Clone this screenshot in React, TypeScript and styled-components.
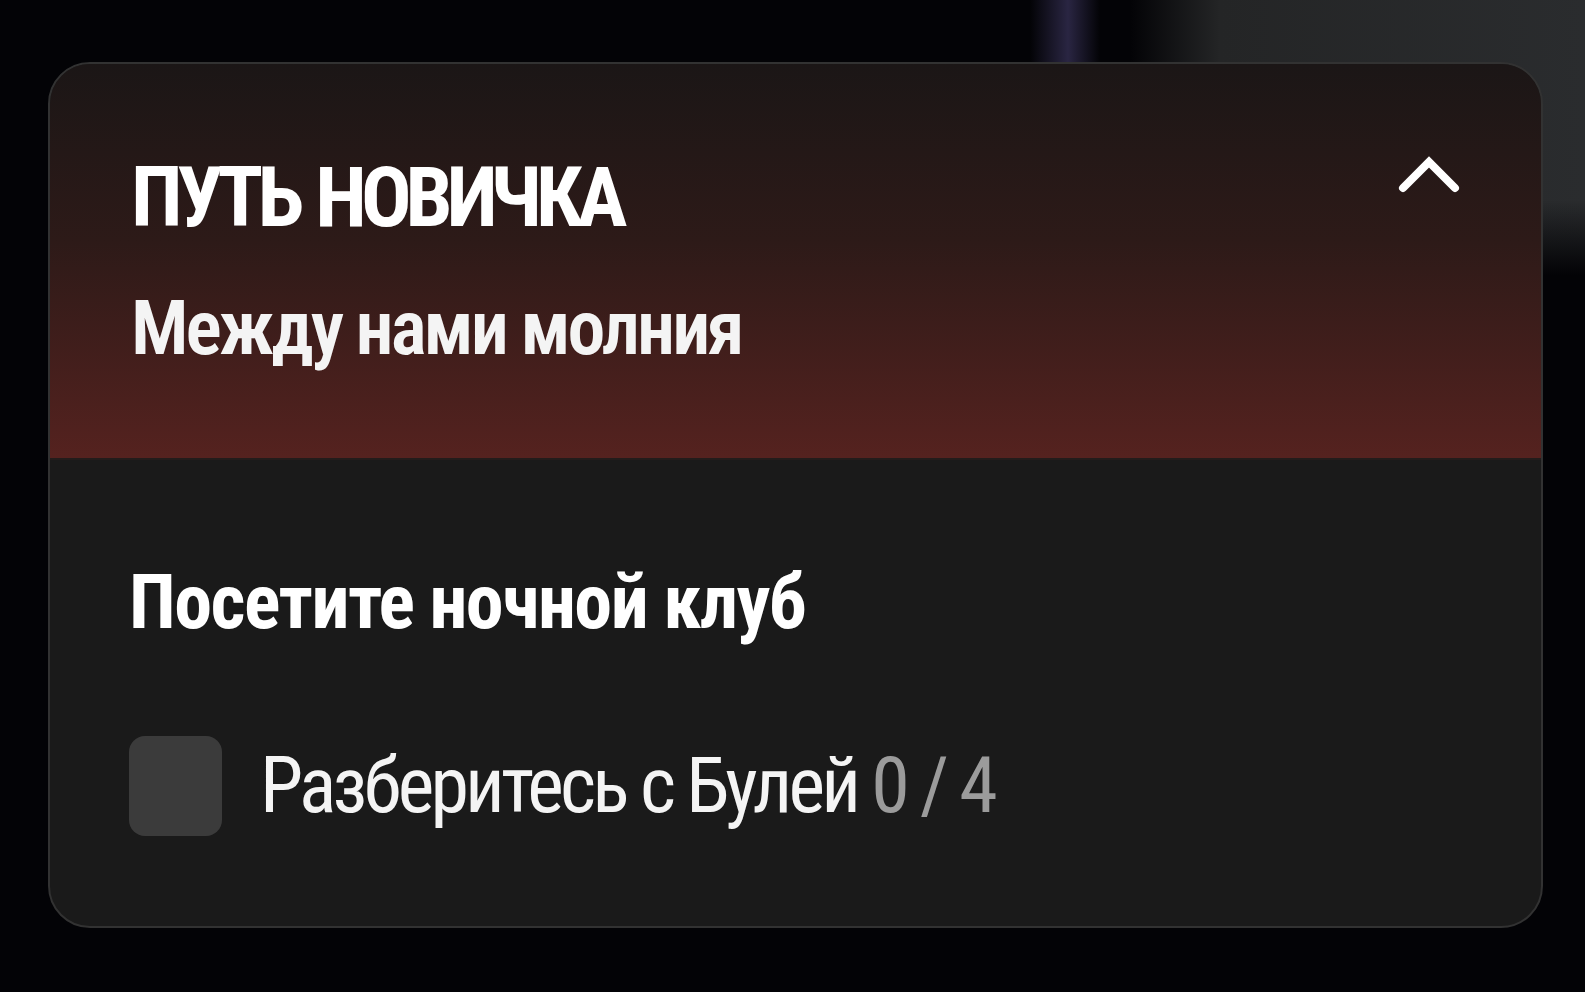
import styled, { createGlobalStyle } from "styled-components";

const GlobalStyle = createGlobalStyle`
  html, body {
    margin: 0;
    padding: 0;
    background: #030306;
  }
  * {
    box-sizing: border-box;
  }
`;

export default function App() {
  return (
    <Page>
      <GlobalStyle />
      <Card>
        <Header>
          <HeaderTop>
            <Title>ПУТЬ НОВИЧКА</Title>
            <Toggle aria-label="Свернуть">
              <svg width="64" height="40" viewBox="0 0 64 40" fill="none">
                <path
                  d="M6 34 L32 8 L58 34"
                  stroke="#fff"
                  strokeWidth="8"
                  strokeLinecap="round"
                  strokeLinejoin="miter"
                />
              </svg>
            </Toggle>
          </HeaderTop>
          <Subtitle>Между нами молния</Subtitle>
        </Header>

        <Body>
          <TaskTitle>Посетите ночной клуб</TaskTitle>
          <TaskRow>
            <Checkbox />
            <TaskText>
              Разберитесь с Булей <Progress>0 / 4</Progress>
            </TaskText>
          </TaskRow>
        </Body>
      </Card>
    </Page>
  );
}

const Page = styled.div`
  width: 1585px;
  height: 992px;
  padding: 62px 42px 0 48px;
  background:
    linear-gradient(90deg, transparent 1030px, rgba(58, 52, 92, 0.7) 1068px, transparent 1100px) 0 0 / 100% 64px no-repeat,
    linear-gradient(180deg, transparent 200px, #030306 275px) 0 0 / 100% 100% no-repeat,
    linear-gradient(90deg, transparent 1130px, #242526 1220px, #2a2c2e 100%) 0 0 / 100% 100% no-repeat,
    #030306;
  font-family: "Roboto Condensed", "Liberation Sans Narrow", "DejaVu Sans Condensed", "Liberation Sans", sans-serif;
`;

const Card = styled.div`
  height: 866px;
  border-radius: 42px;
  border: 2px solid #323232;
  overflow: hidden;
  background: #1a1a1a;
  display: flex;
  flex-direction: column;
`;

const Header = styled.div`
  height: 396px;
  padding: 92px 80px 0 81px;
  background: linear-gradient(180deg, #1b1616 0%, #2d1a18 45%, #55221f 100%);
  border-bottom: 2px solid #231c1b;
`;

const HeaderTop = styled.div`
  display: flex;
  justify-content: space-between;
  align-items: flex-start;
`;

const Title = styled.h1`
  margin: 0;
  font-size: 84px;
  line-height: 84px;
  font-weight: 700;
  color: #fff;
  letter-spacing: -6px;
  word-spacing: 4px;
`;

const Toggle = styled.button`
  background: none;
  border: none;
  padding: 0;
  margin-top: -2px;
  cursor: pointer;
  display: flex;
`;

const Subtitle = styled.p`
  margin: 48px 0 0;
  font-size: 76px;
  line-height: 80px;
  font-weight: 600;
  color: #f4f4f4;
  letter-spacing: -3px;
`;

const Body = styled.div`
  flex: 1;
  padding: 100px 80px 0 79px;
`;

const TaskTitle = styled.h2`
  margin: 0;
  font-size: 76px;
  line-height: 84px;
  font-weight: 700;
  color: #fff;
  letter-spacing: -1.5px;
`;

const TaskRow = styled.div`
  margin-top: 92px;
  display: flex;
  align-items: center;
  gap: 38px;
`;

const Checkbox = styled.div`
  width: 93px;
  height: 100px;
  border-radius: 16px;
  background: #3b3b3b;
  flex-shrink: 0;
`;

const TaskText = styled.span`
  font-size: 78px;
  line-height: 84px;
  font-weight: 400;
  color: #f4f4f4;
  letter-spacing: -3.8px;
`;

const Progress = styled.span`
  color: #9b9b9b;
`;
